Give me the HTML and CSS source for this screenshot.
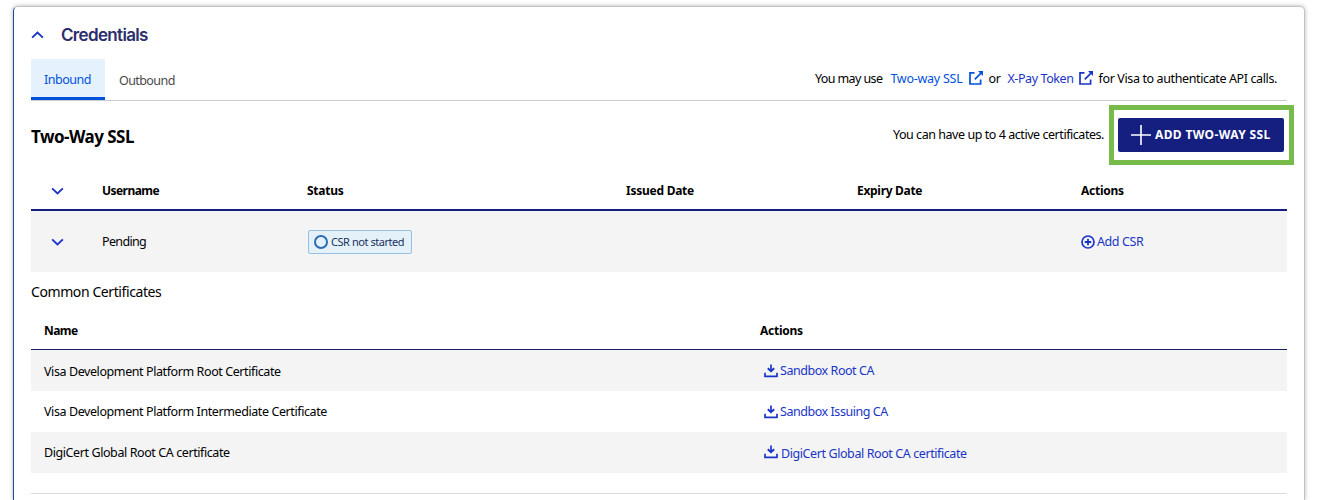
FILE: index.html
```html
<!DOCTYPE html>
<html lang="en">
<head>
  <meta charset="UTF-8" />
  <meta name="viewport" content="width=device-width, initial-scale=1" />
  <title>Credentials</title>
  <link rel="stylesheet" href="styles.css">
</head>
<body>

<svg class="sprite">
  <symbol id="chevron" viewBox="0 0 14 8">
    <path d="M1.2 1.1 L7 6.6 L12.8 1.1" fill="none" stroke="currentColor" stroke-width="2" />
  </symbol>
  <symbol id="external" viewBox="0 0 16 16">
    <path d="M6.5 2.8 H2 V14 H12.6 V9.6" fill="none" stroke="currentColor" stroke-width="1.7" />
    <path d="M6.8 9.4 L13 3.2" fill="none" stroke="currentColor" stroke-width="1.7" />
    <path d="M10 1 H15 V6 Z" fill="currentColor" />
  </symbol>
  <symbol id="download" viewBox="0 0 14 14">
    <path d="M1 8.8 V12.4 H13 V8.8" fill="none" stroke="currentColor" stroke-width="1.7" stroke-linejoin="round" />
    <path d="M7 0.4 V7" fill="none" stroke="currentColor" stroke-width="1.7" />
    <path d="M3.8 4.2 L7 7.2 L10.2 4.2" fill="none" stroke="currentColor" stroke-width="1.9" />
  </symbol>
</svg>

<div class="panel">
  <div class="panel-title">
    <svg class="chevron up"><use href="#chevron" /></svg>
    <h1>Credentials</h1>
  </div>

  <div class="tabs">
    <a class="tab active">Inbound</a>
    <a class="tab">Outbound</a>
    <div class="auth-note">
      <span class="may-use">You may use</span>
      <a class="link bright two-way">Two-way SSL</a>
      <svg class="external bright"><use href="#external" /></svg>
      <span class="or">or</span>
      <a class="link x-pay">X-Pay Token</a>
      <svg class="external"><use href="#external" /></svg>
      <span class="for-visa">for Visa to authenticate API calls.</span>
    </div>
  </div>

  <div class="section-head">
    <h2>Two-Way SSL</h2>
    <span class="limit">You can have up to 4 active certificates.</span>
    <div class="highlight">
      <button class="add-button">
        <svg class="plus" viewBox="0 0 20 20"><path d="M10 0 V20 M0 10 H20" stroke="#fff" stroke-width="1.6" /></svg>
        <span>ADD TWO-WAY SSL</span>
      </button>
    </div>
  </div>

  <div class="grid-row grid-head">
    <div><svg class="chevron"><use href="#chevron" /></svg></div>
    <div class="th-user">Username</div>
    <div>Status</div>
    <div>Issued Date</div>
    <div class="th-expiry">Expiry Date</div>
    <div>Actions</div>
  </div>
  <div class="grid-row grid-body">
    <div><svg class="chevron"><use href="#chevron" /></svg></div>
    <div class="pending">Pending</div>
    <div>
      <div class="badge"><i class="ring"></i><span>CSR not started</span></div>
    </div>
    <div></div>
    <div></div>
    <div class="add-csr">
      <svg class="circle-plus" viewBox="0 0 14 14"><circle cx="7" cy="7" r="6" fill="none" stroke="currentColor" stroke-width="1.7" /><path d="M7 3.7 V10.3 M3.7 7 H10.3" stroke="currentColor" stroke-width="1.8" /></svg>
      <a class="link">Add CSR</a>
    </div>
  </div>

  <h3>Common Certificates</h3>

  <div class="cert-row cert-head">
    <div class="th-name">Name</div>
    <div>Actions</div>
  </div>
  <div class="cert-row shaded">
    <div class="cert-name low">Visa Development Platform Root Certificate</div>
    <div class="download-cell"><svg class="download"><use href="#download" /></svg><a class="link">Sandbox Root CA</a></div>
  </div>
  <div class="cert-row">
    <div class="cert-name">Visa Development Platform Intermediate Certificate</div>
    <div class="download-cell"><svg class="download"><use href="#download" /></svg><a class="link">Sandbox Issuing CA</a></div>
  </div>
  <div class="cert-row shaded">
    <div class="cert-name">DigiCert Global Root CA certificate</div>
    <div class="download-cell digicert"><svg class="download"><use href="#download" /></svg><a class="link">DigiCert Global Root CA certificate</a></div>
  </div>

  <hr>
</div>

</body>
</html>
```

FILE: styles.css
```css
* { box-sizing: border-box; }
body {
  margin: 0;
  height: 500px;
  padding: 6px 16px 0 13px;
  background: #fff;
  color: #000;
  font-family: "Noto Sans", sans-serif;
  font-size: 12.5px;
  line-height: 18px;
  letter-spacing: -0.41px;
  white-space: nowrap;
}
h1, h2, h3 { margin: 0; }
.sprite { display: none; }
.panel {
  height: 494px;
  padding: 0 17px;
  border: 1px solid #c3c3c3;
  border-left-color: #1b4a9b;
  border-bottom: 0;
  border-radius: 5px 5px 0 0;
  box-shadow: 0 0 4px rgba(0, 0, 0, 0.3);
  clip-path: inset(-6px -6px 0 -6px);
}
.panel-title {
  display: flex;
  align-items: center;
  height: 52px;
  padding: 4px 0 0;
}
.panel-title h1 {
  margin-left: 17px;
  font: 600 17px/24px Inter, sans-serif;
  letter-spacing: -0.66px;
  color: #2b2e6b;
}
.chevron {
  display: block;
  width: 13px;
  height: 8px;
  color: #1a34c8;
}
.chevron.up { transform: rotate(180deg); }
.tabs {
  display: flex;
  height: 42px;
  border-bottom: 1px solid #ccc;
}
.tab {
  height: 41px;
  padding: 13px 14px 0;
  color: #4a4a4a;
  letter-spacing: -0.58px;
}
.tab.active {
  width: 74px;
  padding: 12px 13px 0;
  background: #e5f1fd;
  border-bottom: 3px solid #0051dc;
  color: #0051dc;
  letter-spacing: -0.48px;
}
.auth-note {
  display: flex;
  margin-left: auto;
  padding: 11px 10px 0 0;
}
.link { color: #1a34c8; }
.link.bright { color: #0051dc; }
.may-use {
  margin-right: 8px;
  letter-spacing: -0.6px;
}
.two-way { letter-spacing: -0.25px; }
.for-visa { letter-spacing: -0.38px; }
.external {
  width: 16px;
  height: 16px;
  margin: 0 5px 0 4px;
  color: #1a34c8;
}
.external.bright {
  margin-left: 5px;
  color: #0051dc;
}
.or { margin-right: 7px; }
.section-head {
  display: flex;
  height: 70px;
  padding-top: 4px;
}
h2 {
  padding-top: 20px;
  font-size: 17px;
  line-height: 24px;
  letter-spacing: -0.53px;
}
.limit {
  margin-left: auto;
  padding: 21px 5px 0 0;
  letter-spacing: -0.45px;
}
.highlight {
  width: 185px;
  height: 60px;
  margin-right: -7px;
  padding: 8px 4px 7px;
  border: 5px solid #77bc4b;
}
.add-button {
  display: flex;
  align-items: center;
  width: 166px;
  height: 34px;
  padding: 0 0 0 13px;
  border: 0;
  border-radius: 2px;
  background: #151f80;
  color: #fff;
  font: bold 12px/18px "Noto Sans", sans-serif;
  letter-spacing: 0.37px;
}
.plus {
  width: 20px;
  height: 20px;
  margin-right: 4px;
}
.grid-row {
  display: grid;
  grid-template-columns: 71px 205px 319px 231px 224px 206px;
  align-items: center;
}
.grid-row .chevron { margin-left: 20px; }
.grid-head,
.cert-head {
  font-size: 12px;
  font-weight: bold;
  letter-spacing: -0.25px;
}
.grid-head {
  height: 40px;
  padding-top: 1px;
  border-bottom: 2px solid #151f80;
}
.th-user, .th-name { letter-spacing: -0.55px; }
.th-expiry { letter-spacing: -0.3px; }
.grid-body {
  height: 61px;
  background: #f4f4f4;
}
.pending { letter-spacing: -0.65px; }
.badge {
  display: flex;
  align-items: center;
  width: 104px;
  height: 24px;
  margin-left: 1px;
  padding-left: 5px;
  border: 1px solid #97c0e3;
  border-radius: 2px;
  background: #e5f1f9;
  color: #17325f;
  font-size: 11px;
  letter-spacing: -0.45px;
}
.ring {
  width: 14px;
  height: 14px;
  margin-right: 3px;
  border: 2px solid #2b6cb5;
  border-radius: 50%;
}
.add-csr {
  display: flex;
  align-items: center;
}
.circle-plus {
  width: 14px;
  height: 14px;
  margin: 1px 2px 0 0;
  color: #1a34c8;
}
h3 {
  height: 40px;
  padding-top: 10px;
  font-size: 14px;
  font-weight: normal;
  line-height: 20px;
}
.cert-row {
  display: grid;
  grid-template-columns: 716px 1fr;
  align-items: center;
  height: 41px;
  padding-left: 13px;
}
.cert-head {
  height: 38px;
  border-bottom: 1px solid #151f60;
}
.shaded { background: #f4f4f4; }
.cert-name.low { padding-top: 2px; }
.download-cell {
  display: flex;
  align-items: center;
  padding-left: 4px;
  letter-spacing: -0.45px;
}
.download {
  width: 14px;
  height: 14px;
  margin: 1px 2px 0 0;
  color: #1a34c8;
}
.digicert {
  padding-top: 2px;
  letter-spacing: -0.41px;
}
.digicert .download { margin: -3px 3px 0 0; }
hr {
  margin: 20px 0 0;
  border: 0;
  border-top: 1px solid #ddd;
}
```
